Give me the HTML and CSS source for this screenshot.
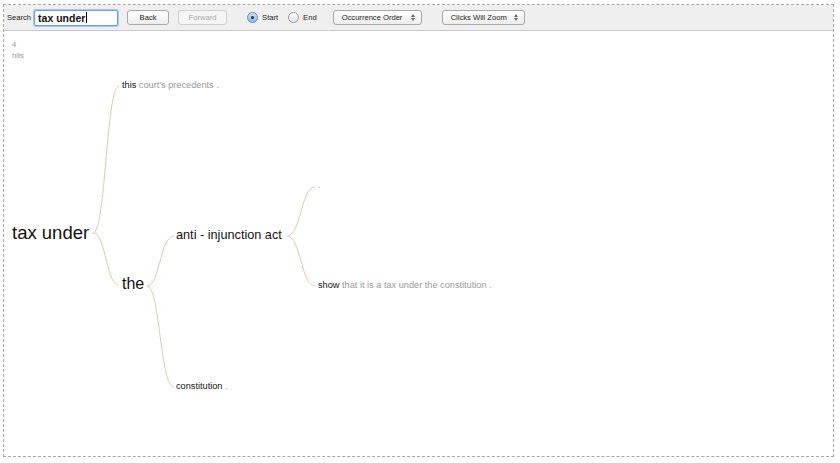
FILE: index.html
```html
<!DOCTYPE html>
<html lang="en">
<head>
    <meta charset="UTF-8">
    <title>Word Tree</title>
    <link rel="stylesheet" href="styles.css">
</head>
<body>
    <div class="frame">
        <div class="toolbar">
            <label class="search-label">Search</label>
            <div class="search-box">tax under<span class="caret"></span></div>
            <button class="btn back-btn">Back</button>
            <button class="btn fwd-btn" disabled>Forward</button>
            <div class="radio-group">
                <span class="radio checked"></span><span class="radio-label">Start</span>
                <span class="radio"></span><span class="radio-label">End</span>
            </div>
            <div class="select sel-order">Occurrence Order<span class="arrows"></span></div>
            <div class="select sel-zoom">Clicks Will Zoom<span class="arrows"></span></div>
        </div>

        <div class="tree">
            <div class="hits">4<br>hits</div>

            <svg class="links" width="829" height="425">
                <!-- root -> children -->
                <path d="M89,202 C102,202 102,55 115,55" />
                <path d="M89,202 C102,202 102,254 115,254" />
                <!-- the -> children -->
                <path d="M143,255 C156,255 156,205 170,205" />
                <path d="M143,255 C156,255 156,356 170,356" />
                <!-- anti-injunction act -> children -->
                <path d="M283,205 C297,205 297,156 311,156" />
                <path d="M283,205 C297,205 297,255 311,255" />
            </svg>

            <div class="node n-root"><b>tax under</b></div>
            <div class="node n-this"><b>this</b> court's precedents .</div>
            <div class="node n-the"><b>the</b></div>
            <div class="node n-anti"><b>anti - injunction act</b></div>
            <div class="node n-const"><b>constitution</b> .</div>
            <div class="node n-dot">.</div>
            <div class="node n-show"><b>show</b> that it is a tax under the constitution .</div>
        </div>
    </div>
</body>
</html>
```

FILE: styles.css
```css
body {
    margin: 0;
    font-family: "Liberation Sans", Arial, sans-serif;
    background: #fff;
}

.frame {
    margin: 4px 0 0 3px;
    width: 829px;
    height: 451px;
    border: 1px dashed #a8a8a8;
    display: flex;
    flex-direction: column;
}

.toolbar {
    height: 25px;
    flex: none;
    background: #efefef;
    border-bottom: 1px solid #c9c9c9;
    display: flex;
    align-items: center;
    padding-left: 3px;
    font-size: 7.6px;
    color: #222;
}

.search-label {
    margin-right: 3px;
}

.search-box {
    box-sizing: border-box;
    width: 84px;
    height: 16px;
    border: 1px solid #6b9fe0;
    box-shadow: 0 0 0 1px #a9c8f0;
    border-radius: 2px;
    background: #fff;
    font-size: 10.5px;
    font-weight: bold;
    color: #111;
    padding-left: 3px;
    line-height: 14px;
    display: flex;
    align-items: center;
}

.caret {
    display: inline-block;
    width: 1px;
    height: 11px;
    background: #000;
    margin-left: 1px;
}

.btn {
    box-sizing: border-box;
    height: 15px;
    border: 1px solid #a9a9a9;
    border-radius: 3px;
    background: linear-gradient(#ffffff, #ececec);
    font-family: inherit;
    font-size: 7.6px;
    color: #222;
    padding: 0;
    margin-left: 9px;
}

.back-btn {
    width: 42px;
}

.fwd-btn {
    width: 49px;
    color: #a8a8a8;
    border-color: #cfcfcf;
    background: #f5f5f5;
}

.radio-group {
    display: flex;
    align-items: center;
    margin-left: 20px;
}

.radio {
    box-sizing: border-box;
    width: 11px;
    height: 11px;
    border: 1px solid #9a9a9a;
    border-radius: 50%;
    background: linear-gradient(#ffffff, #e4e4e4);
    position: relative;
}

.radio.checked {
    border-color: #5c8fd0;
    background: linear-gradient(#cfe3fb, #8bb6ea);
}

.radio.checked::after {
    content: "";
    position: absolute;
    left: 3px;
    top: 3px;
    width: 3px;
    height: 3px;
    border-radius: 50%;
    background: #1d2f4a;
}

.radio-label {
    margin: 0 10px 0 4px;
}

.select {
    box-sizing: border-box;
    height: 15px;
    border: 1px solid #a9a9a9;
    border-radius: 3px;
    background: linear-gradient(#ffffff, #ececec);
    display: flex;
    align-items: center;
    padding-left: 8px;
    position: relative;
}

.sel-order {
    width: 89px;
    margin-left: 6px;
}

.sel-zoom {
    width: 83px;
    margin-left: 20px;
}

.arrows {
    position: absolute;
    right: 5px;
    top: 3px;
    width: 5px;
    height: 7px;
}

.arrows::before,
.arrows::after {
    content: "";
    position: absolute;
    left: 0;
    border-left: 2px solid transparent;
    border-right: 2px solid transparent;
}

.arrows::before {
    top: 0;
    border-bottom: 3px solid #666;
}

.arrows::after {
    bottom: 0;
    border-top: 3px solid #666;
}

.tree {
    flex: 1;
    position: relative;
}

.hits {
    position: absolute;
    left: 8px;
    top: 8px;
    font-size: 7.6px;
    line-height: 11px;
    color: #999;
}

.links {
    position: absolute;
    left: 0;
    top: 0;
}

.links path {
    fill: none;
    stroke: #dccbb2;
    stroke-width: 1;
}

.node {
    position: absolute;
    white-space: nowrap;
    color: #999;
    font-size: 9.2px;
    line-height: 12px;
    height: 12px;
}

.node b {
    font-weight: normal;
    color: #111;
}

.n-root {
    left: 8px;
    top: 189px;
    font-size: 18.5px;
    line-height: 26px;
    height: 26px;
}

.n-this {
    left: 118px;
    top: 48px;
}

.n-the {
    left: 118px;
    top: 242px;
    font-size: 16px;
    line-height: 22px;
    height: 22px;
}

.n-anti {
    left: 172px;
    top: 195px;
    font-size: 12.7px;
    line-height: 18px;
    height: 18px;
}

.n-const {
    left: 172px;
    top: 349px;
}

.n-dot {
    left: 314px;
    top: 148px;
}

.n-show {
    left: 314px;
    top: 248px;
}
```
